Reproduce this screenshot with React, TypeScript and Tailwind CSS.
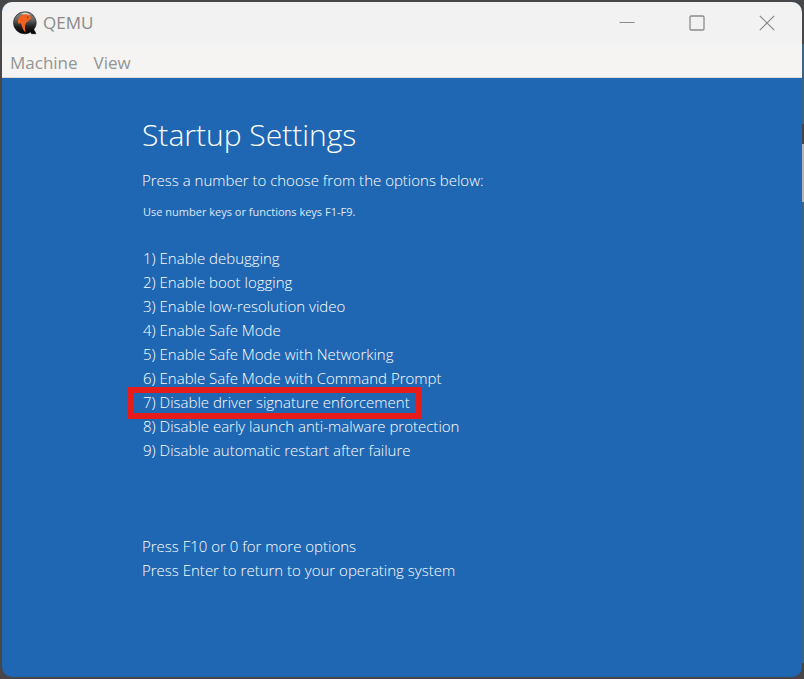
import React from "react";

const options = [
  "Enable debugging",
  "Enable boot logging",
  "Enable low-resolution video",
  "Enable Safe Mode",
  "Enable Safe Mode with Networking",
  "Enable Safe Mode with Command Prompt",
  "Disable driver signature enforcement",
  "Disable early launch anti-malware protection",
  "Disable automatic restart after failure",
];

function QemuLogo() {
  return (
    <svg className="size-6" viewBox="0 0 24 24" aria-hidden="true">
      <defs>
        <linearGradient id="ball" x1="0" y1="0" x2="0" y2="1">
          <stop offset="0" stopColor="#8a8a8a" />
          <stop offset="0.35" stopColor="#666" />
          <stop offset="0.7" stopColor="#1c1c1c" />
          <stop offset="1" stopColor="#000" />
        </linearGradient>
      </defs>
      <path d="M11.500 0.800a11 11 0 1 0 0 22c2.500 0 4.500-.7 6.200-1.800l.8 1.700h4.500l-2.200-4.200A11 11 0 0 0 11.500.8z" fill="url(#ball)" stroke="#111" strokeWidth="0.600" />
      <path d="M8 3C10 1.300 14 1.200 17 3.500l-2 1.200z" fill="#d8d8d8" />
      <path d="M5.500 7.500C7.500 3.800 11.500 2.300 15 3.600c1.800.7 2.500 1.700 3 3l1.500 1.200-2.700.2c-.5 2-3 2.800-4 4.500-1.500 2.700-.6 5-.3 9-2.400-2.200-3.300-5-4-7.500C8 12.300 7.200 11.700 5.300 12.800c-.4-1.800-.5-3.500.2-5.300z" fill="#f1621f" />
      <circle cx="14.800" cy="6.200" r="0.700" fill="#332" />
    </svg>
  );
}

function TitleBar() {
  return (
    <header className="flex h-[43px] items-center justify-between bg-[#f2f2f2] pb-[2px] pl-[11px] text-[#8a8a8a]">
      <div className="flex items-center gap-1.5">
        <QemuLogo />
        <h1 className="text-[17px] leading-6">QEMU</h1>
      </div>
      <div className="flex h-full">
        <button type="button" aria-label="Minimize" className="flex w-[70px] items-center justify-center">
          <svg className="size-4" viewBox="0 0 16 16" fill="none" stroke="#8a8a8a">
            <path d="M0.500 7.500h15" />
          </svg>
        </button>
        <button type="button" aria-label="Maximize" className="flex w-[70px] items-center justify-center">
          <svg className="size-4" viewBox="0 0 16 16" fill="none" stroke="#8a8a8a" strokeWidth="1.300">
            <rect x="1" y="1" width="14" height="14" rx="1.300" />
          </svg>
        </button>
        <button type="button" aria-label="Close" className="flex w-[70px] items-center justify-center">
          <svg className="size-4" viewBox="0 0 16 16" fill="none" stroke="#858585" strokeWidth="1.200">
            <path d="M0.800 0.800l14.400 14.400M15.200 0.800L0.800 15.200" />
          </svg>
        </button>
      </div>
    </header>
  );
}

function MenuBar() {
  return (
    <nav className="flex h-[33px] items-center gap-4 border-b border-[#dcd8d6] bg-[#f6f4f2] px-2 pt-[3px] text-[17px] leading-6 text-[#919494]">
      <button type="button">Machine</button>
      <button type="button">View</button>
    </nav>
  );
}

export default function App() {
  return (
    <div className="flex min-h-screen bg-[#47474a] py-[2px] pl-[2px] font-['Open_Sans','Noto_Sans',sans-serif]">
      <div className="flex flex-1 flex-col overflow-hidden rounded-[10px] bg-[#1f67b3]">
        <TitleBar />
        <MenuBar />
        <main className="flex-1 pt-9 pr-4 pb-16 pl-[140px] text-[15px] leading-6 font-light text-white">
          <h2 className="text-[30px] leading-[42px]">Startup Settings</h2>
          <p className="mt-3">Press a number to choose from the options below:</p>
          <p className="mt-2 pl-px text-[11px] font-normal text-[#dde9f5]">Use number keys or functions keys F1-F9.</p>
          <ol className="mt-[22px] pl-px">
            {options.map((label, i) => (
              <li key={label} className="flex">
                <button
                  type="button"
                  className={
                    i === 6
                      ? "-mt-[3px] -mb-[5px] -ml-[15px] border-[6px] border-[#e81b1b] pr-[5px] pb-[2px] pl-[9px] leading-[18px]"
                      : "leading-6"
                  }
                >
                  {i + 1}) {label}
                </button>
              </li>
            ))}
          </ol>
          <div className="mt-[72px]">
            <p>Press F10 or 0 for more options</p>
            <p>Press Enter to return to your operating system</p>
          </div>
        </main>
      </div>
      <div className="-my-[2px] flex w-[2px] flex-col" aria-hidden="true">
        <div className="h-11" />
        <div className="h-20 bg-[#3d6388]" />
        <div className="h-5" />
        <div className="h-[58px] bg-[#b4b4b4]" />
        <div className="flex-1 bg-[#3d6388]" />
        <div className="h-4" />
      </div>
    </div>
  );
}
